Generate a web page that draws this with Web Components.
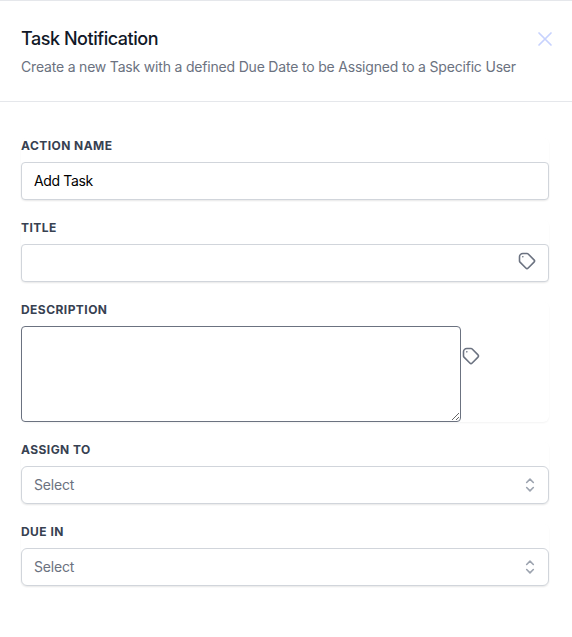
<!DOCTYPE html>
<html lang="en">
<head>
<meta charset="utf-8">
<title>Task Notification</title>
<style>
    body {
        margin: 0;
        background: #ffffff;
        font-family: Inter, "Liberation Sans", sans-serif;
        font-size: 14px;
        line-height: 20px;
        letter-spacing: -0.19px;
    }
</style>
</head>
<body>
<task-panel>
    <panel-header slot="header">
        <span slot="title">Task Notification</span>
        <span slot="subtitle">Create a new Task with a defined Due Date to be Assigned to a Specific User</span>
    </panel-header>
    <form-field label="Action Name"><text-box value="Add Task"></text-box></form-field>
    <form-field label="Title"><text-box taggable></text-box></form-field>
    <form-field label="Description"><text-block></text-block></form-field>
    <form-field label="Assign To"><select-box>Select</select-box></form-field>
    <form-field label="Due In"><select-box>Select</select-box></form-field>
</task-panel>

<script>
class BaseElement extends HTMLElement {
    constructor() {
        super();

        this.attachShadow({ mode: 'open' });

        const template = document.createElement('template');
        template.innerHTML = this.constructor.markup;
        this.shadowRoot.appendChild(template.content.cloneNode(true));
    }
}

class TaskPanel extends BaseElement {
    static markup = `
<style>
    :host {
        display: block;
        border-top: 1px solid #e5e7eb;
    }
    .fields {
        display: flex;
        flex-direction: column;
        gap: 20px;
        padding: 36px 23px 50px 21px;
    }
</style>
<slot name="header"></slot>
<div class="fields"><slot></slot></div>
`;
}

class PanelHeader extends BaseElement {
    static markup = `
<style>
    :host {
        display: flex;
        justify-content: space-between;
        align-items: flex-start;
        box-sizing: border-box;
        height: 101px;
        padding: 24px 15px 0 21px;
        border-bottom: 1px solid #e5e7eb;
    }
    h2 {
        margin: 0;
        font-size: 18px;
        font-weight: 500;
        line-height: 28px;
        letter-spacing: -0.46px;
        color: #111827;
    }
    p {
        margin: 4px 0 0;
        color: #6b7280;
    }
    button {
        display: flex;
        margin: 2px 0 0;
        padding: 0;
        border: 0;
        background: none;
        color: #c7d2fe;
    }
</style>
<div>
    <h2><slot name="title"></slot></h2>
    <p><slot name="subtitle"></slot></p>
</div>
<button type="button" aria-label="Close"><svg-icon name="close" size="24"></svg-icon></button>
`;
}

class FormField extends BaseElement {
    static markup = `
<style>
    :host {
        display: flex;
        flex-direction: column;
        gap: 8px;
        border-radius: 6px;
        box-shadow: 0 1px 2px 0 rgba(0, 0, 0, 0.05);
    }
    label {
        font-size: 12px;
        font-weight: 700;
        line-height: 16px;
        letter-spacing: 0.45px;
        text-transform: uppercase;
        color: #374151;
    }
</style>
<label></label>
<slot></slot>
`;

    connectedCallback() {
        this.shadowRoot.querySelector('label').textContent = this.getAttribute('label');
    }
}

class TextBox extends BaseElement {
    static markup = `
<style>
    :host {
        display: flex;
        align-items: center;
        box-sizing: border-box;
        height: 38px;
        padding: 0 11px 0 12px;
        border: 1px solid #d1d5db;
        border-radius: 4px;
        background: #ffffff;
        box-shadow: 0 1px 2px 0 rgba(0, 0, 0, 0.05);
    }
    input {
        flex: 1;
        min-width: 0;
        padding: 0;
        border: 0;
        outline: 0;
        background: none;
        font: inherit;
        letter-spacing: -0.35px;
        color: #000000;
    }
    svg-icon {
        display: none;
        margin-bottom: 4px;
        color: #6b7280;
    }
    :host([taggable]) svg-icon {
        display: block;
    }
</style>
<input type="text">
<svg-icon name="tag" size="20"></svg-icon>
`;

    connectedCallback() {
        this.shadowRoot.querySelector('input').value = this.getAttribute('value') || '';
    }
}

class TextBlock extends BaseElement {
    static markup = `
<style>
    :host {
        display: flex;
        align-items: flex-start;
    }
    textarea {
        box-sizing: border-box;
        width: 440px;
        height: 96px;
        margin: 0;
        padding: 8px 12px;
        border: 1px solid #6b7280;
        border-radius: 4px;
        outline: 0;
        background: #ffffff;
        font: inherit;
    }
    svg-icon {
        margin-top: 20px;
        color: #6b7280;
    }
</style>
<textarea></textarea>
<svg-icon name="tag" size="20"></svg-icon>
`;
}

class SelectBox extends BaseElement {
    static markup = `
<style>
    :host {
        display: flex;
        align-items: center;
        justify-content: space-between;
        box-sizing: border-box;
        height: 38px;
        padding: 0 8px 0 12px;
        border: 1px solid #d1d5db;
        border-radius: 6px;
        background: #ffffff;
        box-shadow: 0 1px 2px 0 rgba(0, 0, 0, 0.05);
        color: #6b7280;
    }
    svg-icon {
        color: #9ca3af;
    }
</style>
<span><slot></slot></span>
<svg-icon name="selector" size="20"></svg-icon>
`;
}

const icons = {
    close: { d: 'M6 18L18 6M6 6l12 12', width: 1.7 },
    tag: { d: 'M7 7h.01M7 3h5c.512 0 1.024.195 1.414.586l7 7a2 2 0 010 2.828l-7 7a2 2 0 01-2.828 0l-7-7A1.994 1.994 0 013 12V7a4 4 0 014-4z', width: 1.9 },
    selector: { d: 'M8 9l4-4 4 4m0 6l-4 4-4-4', width: 1.9 }
};

class SvgIcon extends BaseElement {
    static markup = `
<style>
    :host {
        display: block;
        flex: none;
    }
    svg {
        display: block;
        fill: none;
        stroke: currentColor;
        stroke-linecap: round;
        stroke-linejoin: round;
    }
</style>
<svg viewBox="0 0 24 24"><path/></svg>
`;

    connectedCallback() {
        const icon = icons[this.getAttribute('name')];
        const svg = this.shadowRoot.querySelector('svg');
        const path = this.shadowRoot.querySelector('path');

        svg.setAttribute('width', this.getAttribute('size'));
        svg.setAttribute('height', this.getAttribute('size'));
        path.setAttribute('d', icon.d);
        path.setAttribute('stroke-width', icon.width);
    }
}

customElements.define('svg-icon', SvgIcon);
customElements.define('task-panel', TaskPanel);
customElements.define('panel-header', PanelHeader);
customElements.define('form-field', FormField);
customElements.define('text-box', TextBox);
customElements.define('text-block', TextBlock);
customElements.define('select-box', SelectBox);
</script>
</body>
</html>
